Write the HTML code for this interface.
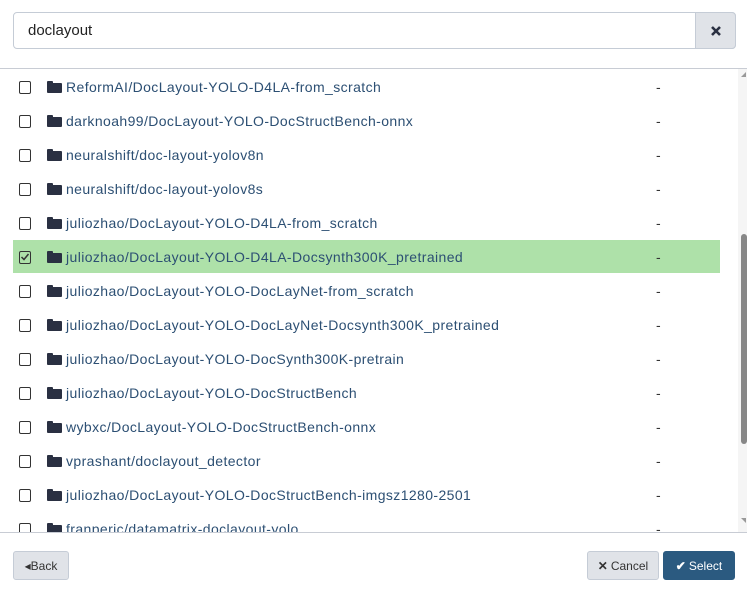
<!DOCTYPE html>
<html><head><style>
body{margin:0;width:747px;height:589px;background:#fff;font-family:"Liberation Sans",sans-serif;position:relative;overflow:hidden}
.search{position:absolute;left:13px;top:12px;width:723px;height:37px;border:1px solid #c5ccd6;border-radius:4px;box-sizing:border-box}
.search span{position:absolute;left:14px;top:9px;font-size:15px;color:#222}
.search .x{position:absolute;right:-1px;top:-1px;width:41px;height:37px;background:#e0e3e8;border:1px solid #c5ccd6;border-radius:0 4px 4px 0;box-sizing:border-box;display:flex;align-items:center;justify-content:center}
.line{position:absolute;left:0;width:747px;height:1px;background:#c8ccd4}
.list{position:absolute;left:0;top:69px;width:747px;height:463px;overflow:hidden}
.row{position:absolute;left:13px;width:707px;height:33px}
.row.sel{background:#aee1a9}
.cb{position:absolute;left:6px;top:10px;width:10px;height:11px;border:1.5px solid #333;border-radius:2px}
.fo{position:absolute;left:34px;top:12px;width:15px;height:10px;background:#2a3042;border-radius:1px}
.fo:before{content:"";position:absolute;left:0;top:-2px;width:6px;height:3px;background:#2a3042;border-radius:1px 1px 0 0}
.t{position:absolute;left:53px;top:8px;font-size:14px;letter-spacing:0.4px;color:#2c4f73;white-space:nowrap}
.d{position:absolute;left:643px;top:8px;font-size:14px;color:#333}
.track{position:absolute;left:738px;top:69px;width:9px;height:463px;background:#f5f5f5}
.thumb{position:absolute;left:741px;top:234px;width:6px;height:210px;background:#878787;border-radius:3px}
.btn{position:absolute;top:551px;height:29px;border:1px solid #c5ccd6;border-radius:3px;background:#e0e3e8;box-sizing:border-box;font-size:12px;color:#333;display:flex;align-items:center;justify-content:center}
</style></head><body>
<div class="search"><span>doclayout</span><div class="x"><svg width="12" height="12" viewBox="0 0 12 12"><path d="M2 2L10 10M10 2L2 10" stroke="#2a3042" stroke-width="2.6"/></svg></div></div>
<div class="line" style="top:68px"></div>
<div class="list">
<div class="row" style="top:2px"><div class="cb"></div><div class="fo"></div><div class="t">ReformAI/DocLayout-YOLO-D4LA-from_scratch</div><div class="d">-</div></div>
<div class="row" style="top:36px"><div class="cb"></div><div class="fo"></div><div class="t">darknoah99/DocLayout-YOLO-DocStructBench-onnx</div><div class="d">-</div></div>
<div class="row" style="top:70px"><div class="cb"></div><div class="fo"></div><div class="t">neuralshift/doc-layout-yolov8n</div><div class="d">-</div></div>
<div class="row" style="top:104px"><div class="cb"></div><div class="fo"></div><div class="t">neuralshift/doc-layout-yolov8s</div><div class="d">-</div></div>
<div class="row" style="top:138px"><div class="cb"></div><div class="fo"></div><div class="t">juliozhao/DocLayout-YOLO-D4LA-from_scratch</div><div class="d">-</div></div>
<div class="row sel" style="top:171px"><div class="cb" style="top:11px"><svg width="10" height="10" viewBox="0 0 10 10" style="position:absolute;left:0;top:0"><path d="M1.5 5L4 7.5L8.5 2" stroke="#333" stroke-width="1.5" fill="none"/></svg></div><div class="fo" style="top:13px"></div><div class="t" style="top:9px">juliozhao/DocLayout-YOLO-D4LA-Docsynth300K_pretrained</div><div class="d" style="top:9px">-</div></div>
<div class="row" style="top:206px"><div class="cb"></div><div class="fo"></div><div class="t">juliozhao/DocLayout-YOLO-DocLayNet-from_scratch</div><div class="d">-</div></div>
<div class="row" style="top:240px"><div class="cb"></div><div class="fo"></div><div class="t">juliozhao/DocLayout-YOLO-DocLayNet-Docsynth300K_pretrained</div><div class="d">-</div></div>
<div class="row" style="top:274px"><div class="cb"></div><div class="fo"></div><div class="t">juliozhao/DocLayout-YOLO-DocSynth300K-pretrain</div><div class="d">-</div></div>
<div class="row" style="top:308px"><div class="cb"></div><div class="fo"></div><div class="t">juliozhao/DocLayout-YOLO-DocStructBench</div><div class="d">-</div></div>
<div class="row" style="top:342px"><div class="cb"></div><div class="fo"></div><div class="t">wybxc/DocLayout-YOLO-DocStructBench-onnx</div><div class="d">-</div></div>
<div class="row" style="top:376px"><div class="cb"></div><div class="fo"></div><div class="t">vprashant/doclayout_detector</div><div class="d">-</div></div>
<div class="row" style="top:410px"><div class="cb"></div><div class="fo"></div><div class="t">juliozhao/DocLayout-YOLO-DocStructBench-imgsz1280-2501</div><div class="d">-</div></div>
<div class="row" style="top:444px"><div class="cb"></div><div class="fo"></div><div class="t">franperic/datamatrix-doclayout-yolo</div><div class="d">-</div></div>
</div>
<div class="track"></div>
<div class="thumb"></div>
<svg style="position:absolute;left:740px;top:72px" width="7" height="6"><path d="M1 5L6 5L6 0Z" fill="#999"/></svg>
<svg style="position:absolute;left:740px;top:518px" width="7" height="6"><path d="M1 0L6 0L6 5Z" fill="#999"/></svg>
<div class="line" style="top:532px"></div>
<div class="btn" style="left:13px;width:56px">◂Back</div>
<div class="btn" style="left:587px;width:72px"><b style="margin-right:3px">✕</b>Cancel</div>
<div class="btn" style="left:663px;width:72px;background:#2b5a80;border-color:#2b5a80;color:#fff"><b style="margin-right:3px">✔</b>Select</div>
</body></html>
